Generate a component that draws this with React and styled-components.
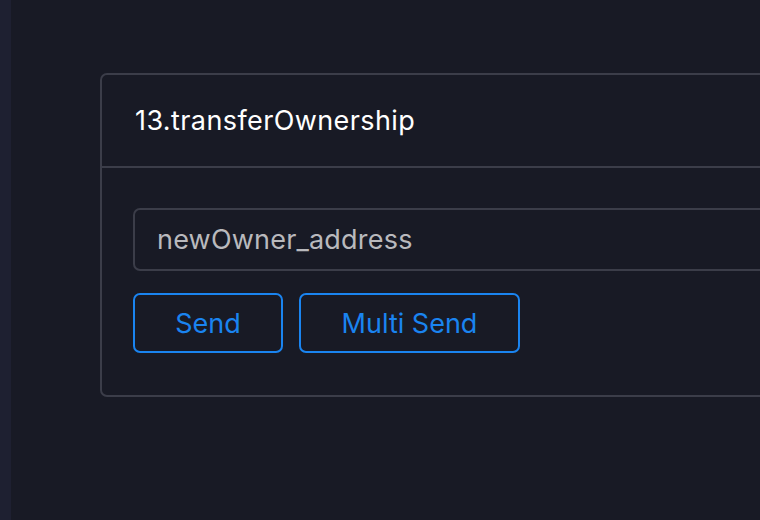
import styled, { createGlobalStyle } from "styled-components";

const GlobalStyle = createGlobalStyle`
    html, body {
        margin: 0;
        padding: 0;
        background-color: #181a25;
        font-family: Inter, "Liberation Sans", Arial, sans-serif;
    }
`;

export default function App() {
    return (
        <>
            <GlobalStyle />
            <Pagina>
                <BarraLateral />
                <Conteudo>
                    <Cartao>
                        <Cabecalho>13.transferOwnership</Cabecalho>
                        <Corpo>
                            <Campo placeholder="newOwner_address" />
                            <Botoes>
                                <Botao $largura={150}>Send</Botao>
                                <Botao $largura={221}>Multi Send</Botao>
                            </Botoes>
                        </Corpo>
                    </Cartao>
                </Conteudo>
            </Pagina>
        </>
    );
}

const Pagina = styled.div`
    display: flex;
    width: 760px;
    height: 520px;
    overflow: hidden;
`;

const BarraLateral = styled.div`
    width: 11px;
    flex-shrink: 0;
    background-color: #1e2031;
`;

const Conteudo = styled.div`
    flex: 1;
    padding: 73px 0 0 89px;
    min-width: 0;
`;

const Cartao = styled.div`
    width: 800px;
    border: 2px solid #3b3d49;
    border-radius: 7px;
    box-sizing: border-box;
`;

const Cabecalho = styled.div`
    height: 91px;
    display: flex;
    align-items: center;
    padding-left: 33px;
    font-size: 27px;
    letter-spacing: 0.4px;
    color: #ffffff;
    border-bottom: 2px solid #3b3d49;
`;

const Corpo = styled.div`
    display: flex;
    flex-direction: column;
    gap: 22px;
    padding: 40px 0 42px 31px;
`;

const Campo = styled.input`
    width: 700px;
    height: 63px;
    box-sizing: border-box;
    background-color: transparent;
    border: 2px solid #3b3d49;
    border-radius: 7px;
    padding: 0 22px;
    font-family: Inter, "Liberation Sans", Arial, sans-serif;
    font-size: 27px;
    letter-spacing: 0.2px;
    color: #ffffff;
    outline: none;

    &::placeholder {
        color: #b9b9bd;
    }
`;

const Botoes = styled.div`
    display: flex;
    gap: 16px;
`;

const Botao = styled.button`
    width: ${props => props.$largura}px;
    height: 60px;
    box-sizing: border-box;
    background-color: transparent;
    border: 2px solid #1a84f0;
    border-radius: 7px;
    color: #1a84f0;
    font-family: Inter, "Liberation Sans", Arial, sans-serif;
    font-size: 27px;
    cursor: pointer;
`;
